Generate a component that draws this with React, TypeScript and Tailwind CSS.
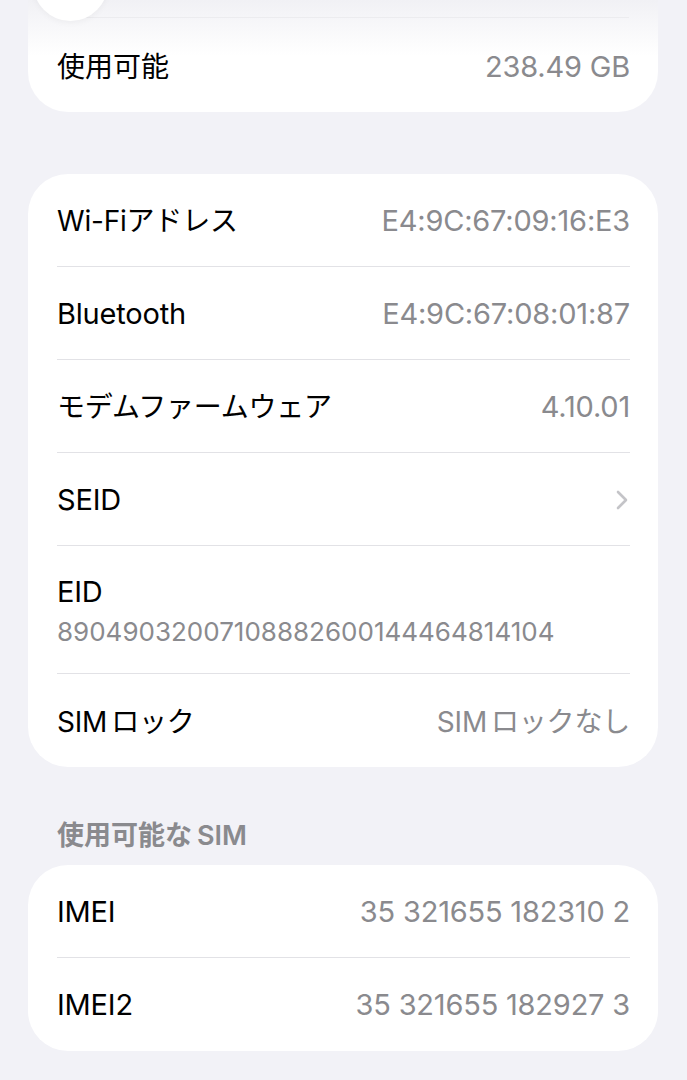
const font = { fontFamily: '"Inter", "Noto Sans CJK JP", sans-serif' };

type RowProps = { label: React.ReactNode; value?: React.ReactNode; chevron?: boolean; last?: boolean; latin?: boolean; jpValue?: boolean };

const Row = ({ label, value, chevron, last, latin, jpValue }: RowProps) => (
	<div className="px-[28px] pl-[29px]">
		<div className={`flex h-[93px] items-center justify-between pt-[2px] ${last ? "" : "border-b border-[#e2e2e6]"}`}>
			<span className={`${latin ? "text-[29px]" : "text-[28px]"} text-black tracking-[-0.2px]`}>{label}</span>
			{value && (
				<span className={`${jpValue ? "text-[28px]" : "text-[29px]"} text-[#8a8a8e] tracking-[-0.2px]`}>{value}</span>
			)}
			{chevron && (
				<svg width="14" height="22" viewBox="0 0 14 22" className="mr-[1px]">
					<polyline points="3,3 11,11 3,19" fill="none" stroke="#c4c4c8" strokeWidth="2.6" strokeLinecap="round" strokeLinejoin="round" />
				</svg>
			)}
		</div>
	</div>
);

const App = () => {
	return (
		<div style={font} className="min-h-[1080px] w-[687px] bg-[#f2f2f7] overflow-hidden">
			<div className="pl-[28px] pr-[29px]">
				{/* storage card, top cut off by the screen edge */}
				<div className="relative h-[112px] rounded-b-[40px] bg-gradient-to-b from-[#f1f1f5] via-white to-white">
					<div className="absolute left-[5px] -top-[54px] h-[75px] w-[75px] rounded-full bg-white shadow-[0_2px_6px_rgba(0,0,0,0.04)]" />
					<div className="mx-[29px] h-[18px] border-b border-[#ececef]" />
					<div className="flex h-[94px] items-center justify-between pl-[29px] pr-[28px] pt-[4px]">
						<span className="text-[28px] text-black">使用可能</span>
						<span className="text-[29px] text-[#8a8a8e] tracking-[-0.2px]">238.49 GB</span>
					</div>
				</div>

				<div className="mt-[62px] overflow-hidden rounded-[40px] bg-white">
					<Row label="Wi-Fiアドレス" value="E4:9C:67:09:16:E3" />
					<Row label="Bluetooth" value="E4:9C:67:08:01:87" latin />
					<Row label="モデムファームウェア" value="4.10.01" />
					<Row label="SEID" chevron latin />
					<div className="pl-[29px] pr-[28px]">
						<div className="flex h-[128px] flex-col justify-center border-b border-[#e2e2e6] pt-[4px]">
							<span className="text-[29px] leading-[40px] text-black tracking-[-0.2px]">EID</span>
							<span className="text-[26px] leading-[40px] text-[#8a8a8e]">89049032007108882600144464814104</span>
						</div>
					</div>
					<Row
						label={<>SIM<span className="ml-[4px]">ロック</span></>}
						value={<>SIM<span className="ml-[4px]">ロックなし</span></>}
						jpValue
						last
					/>
				</div>

				<div className="mt-[49px] pl-[29px] text-[27px] font-semibold text-[#8a8a8e]">
					使用可能な<span className="ml-[5px]">SIM</span>
				</div>

				<div className="mt-[8px] overflow-hidden rounded-[40px] bg-white">
					<Row label="IMEI" value="35 321655 182310 2" latin />
					<Row label="IMEI2" value="35 321655 182927 3" latin last />
				</div>
			</div>
		</div>
	);
};

export default App;
